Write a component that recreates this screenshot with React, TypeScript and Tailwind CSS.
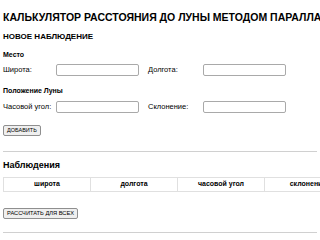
export default function App() {
  const cols = ['широта', 'долгота', 'часовой угол', 'склонение'];
  return (
    <div className="w-[320px] h-[240px] overflow-hidden bg-white text-black font-['Liberation_Sans',Arial,sans-serif] px-[3px]">
      <h1 className="pt-[11px] text-[10.5px] leading-[12px] font-bold whitespace-nowrap">
        КАЛЬКУЛЯТОР РАССТОЯНИЯ ДО ЛУНЫ МЕТОДОМ ПАРАЛЛАКСА
      </h1>

      <h2 className="mt-[9px] text-[8px] leading-[10px] font-bold">НОВОЕ НАБЛЮДЕНИЕ</h2>

      <h3 className="mt-[9px] text-[7px] leading-[8px] font-bold">Место</h3>
      <div className="mt-[5px] flex items-center text-[7.5px] h-[12px]">
        <label className="w-[53px]">Широта:</label>
        <input className="w-[83px] h-[12px] border border-[#a9a9a9] rounded-[2px]" />
        <label className="ml-[9px] w-[55px]">Долгота:</label>
        <input className="w-[83px] h-[12px] border border-[#a9a9a9] rounded-[2px]" />
      </div>

      <h3 className="mt-[11px] text-[7px] leading-[8px] font-bold">Положение Луны</h3>
      <div className="mt-[6px] flex items-center text-[7.5px] h-[12px]">
        <label className="w-[53px]">Часовой угол:</label>
        <input className="w-[83px] h-[12px] border border-[#a9a9a9] rounded-[2px]" />
        <label className="ml-[9px] w-[55px]">Склонение:</label>
        <input className="w-[83px] h-[12px] border border-[#a9a9a9] rounded-[2px]" />
      </div>

      <button className="mt-[12px] block h-[11px] px-[3px] text-[5.5px] leading-[9px] bg-[#efefef] border border-[#8f8f8f] rounded-[2px]">
        ДОБАВИТЬ
      </button>

      <hr className="mt-[15px] border-t border-[#d0d0d0]" />

      <h2 className="mt-[8px] text-[9px] leading-[10px] font-bold">Наблюдения</h2>

      <table className="mt-[7px] border-collapse text-[7px] whitespace-nowrap">
        <thead>
          <tr>
            {cols.map((c) => (
              <th key={c} className="w-[87px] min-w-[87px] h-[14px] border border-[#e0e0e0] font-bold text-center">
                {c}
              </th>
            ))}
          </tr>
        </thead>
      </table>

      <button className="mt-[16px] block h-[11px] px-[3px] text-[5.7px] leading-[9px] bg-[#efefef] border border-[#8f8f8f] rounded-[2px]">
        РАССЧИТАТЬ ДЛЯ ВСЕХ
      </button>

      <hr className="mt-[13px] border-t border-[#d0d0d0]" />
    </div>
  );
}
